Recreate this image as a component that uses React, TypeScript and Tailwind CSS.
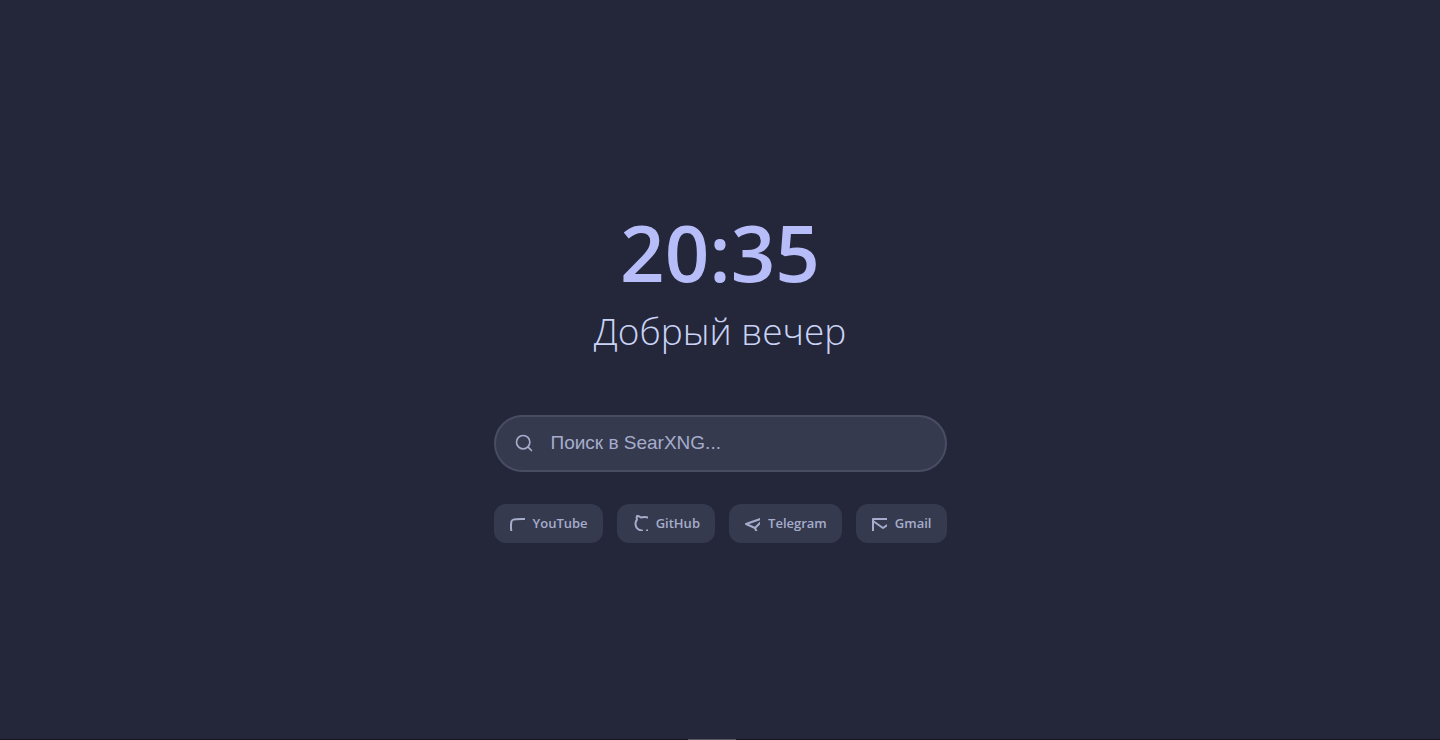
import type { ReactNode } from 'react';

type LinkItem = { label: string; href: string; icon: ReactNode };

const links: LinkItem[] = [
  {
    label: 'YouTube',
    href: 'https://youtube.com',
    icon: (
      <path d="M2.5 17.1A29 29 0 0 1 2.4 6.5a2.8 2.8 0 0 1 1.9-1.9C6 4.1 13 4 13 4s6.9 0 8.6.46" />
    ),
  },
  {
    label: 'GitHub',
    href: 'https://github.com',
    icon: (
      <path d="M16 22v-3.87a3.37 3.37 0 0 0-.94-2.61c3.14-.35 6.44-1.54 6.44-7A5.44 5.44 0 0 0 20 4.77 5.07 5.07 0 0 0 19.91 1S18.73.65 16 2.48a13.38 13.38 0 0 0-7 0C6.27.65 5.09 1 5.09 1A5.07 5.07 0 0 0 5 4.77a5.44 5.44 0 0 0-1.5 3.78c0 5.42 3.3 6.61 6.44 7A3.37 3.37 0 0 0 9 18.13V22" />
    ),
  },
  {
    label: 'Telegram',
    href: 'https://web.telegram.org',
    icon: (
      <>
        <path d="M22 2 11 13" />
        <path d="m22 2-7 20-4-9-9-4 20-7z" />
      </>
    ),
  },
  {
    label: 'Gmail',
    href: 'https://mail.google.com',
    icon: (
      <>
        <path d="M4 4h16c1.1 0 2 .9 2 2v12c0 1.1-.9 2-2 2H4c-1.1 0-2-.9-2-2V4z" />
        <path d="m22 6-10 7L2 6" />
      </>
    ),
  },
];

function QuickLink({ label, href, icon }: LinkItem) {
  return (
    <a
      href={href}
      className="flex items-center gap-2 rounded-xl bg-[#363a4f] px-[15px] py-[10px] text-[13px] leading-[19px] font-semibold text-[#a5adcb]"
    >
      <svg
        className="size-4 shrink-0 overflow-hidden"
        fill="none"
        stroke="currentColor"
        strokeWidth="2"
        strokeLinecap="round"
        strokeLinejoin="round"
        aria-hidden="true"
      >
        {icon}
      </svg>
      {label}
    </a>
  );
}

export default function App() {
  return (
    <div className="flex min-h-screen flex-col bg-[#24273a] font-['Open_Sans','Noto_Sans',sans-serif]">
      <main className="flex grow flex-col items-center justify-center px-4">
        <time className="text-[78px] leading-[110px] font-semibold text-[#b7bdf8]">20:35</time>
        <h1 className="text-[37px] leading-[48px] font-light text-[#cad3f5]">Добрый вечер</h1>
        <div className="mt-[60px] w-full max-w-[453px]">
          <form role="search" className="relative">
            <svg
              className="absolute top-[18px] left-5 size-5 text-[#a5adcb]"
              viewBox="0 0 24 24"
              fill="none"
              stroke="currentColor"
              strokeWidth="2"
              strokeLinecap="round"
              aria-hidden="true"
            >
              <circle cx="11" cy="11" r="8" />
              <path d="m21 21-4.35-4.35" />
            </svg>
            <input
              type="text"
              aria-label="Поиск в SearXNG"
              placeholder="Поиск в SearXNG..."
              className="h-[57px] w-full rounded-full border-2 border-[#494d64] bg-[#363a4f] pr-5 pl-[55px] font-['Liberation_Sans',sans-serif] text-[19px] text-[#cad3f5] outline-none placeholder:text-[#a5adcb]"
            />
          </form>
          <nav className="mt-8 flex flex-wrap justify-between gap-y-3">
            {links.map((link) => (
              <QuickLink key={link.label} {...link} />
            ))}
          </nav>
        </div>
      </main>
      <footer className="flex h-px justify-center bg-[#181420]">
        <div className="mr-4 w-12 bg-[#5b5660]" />
      </footer>
    </div>
  );
}
